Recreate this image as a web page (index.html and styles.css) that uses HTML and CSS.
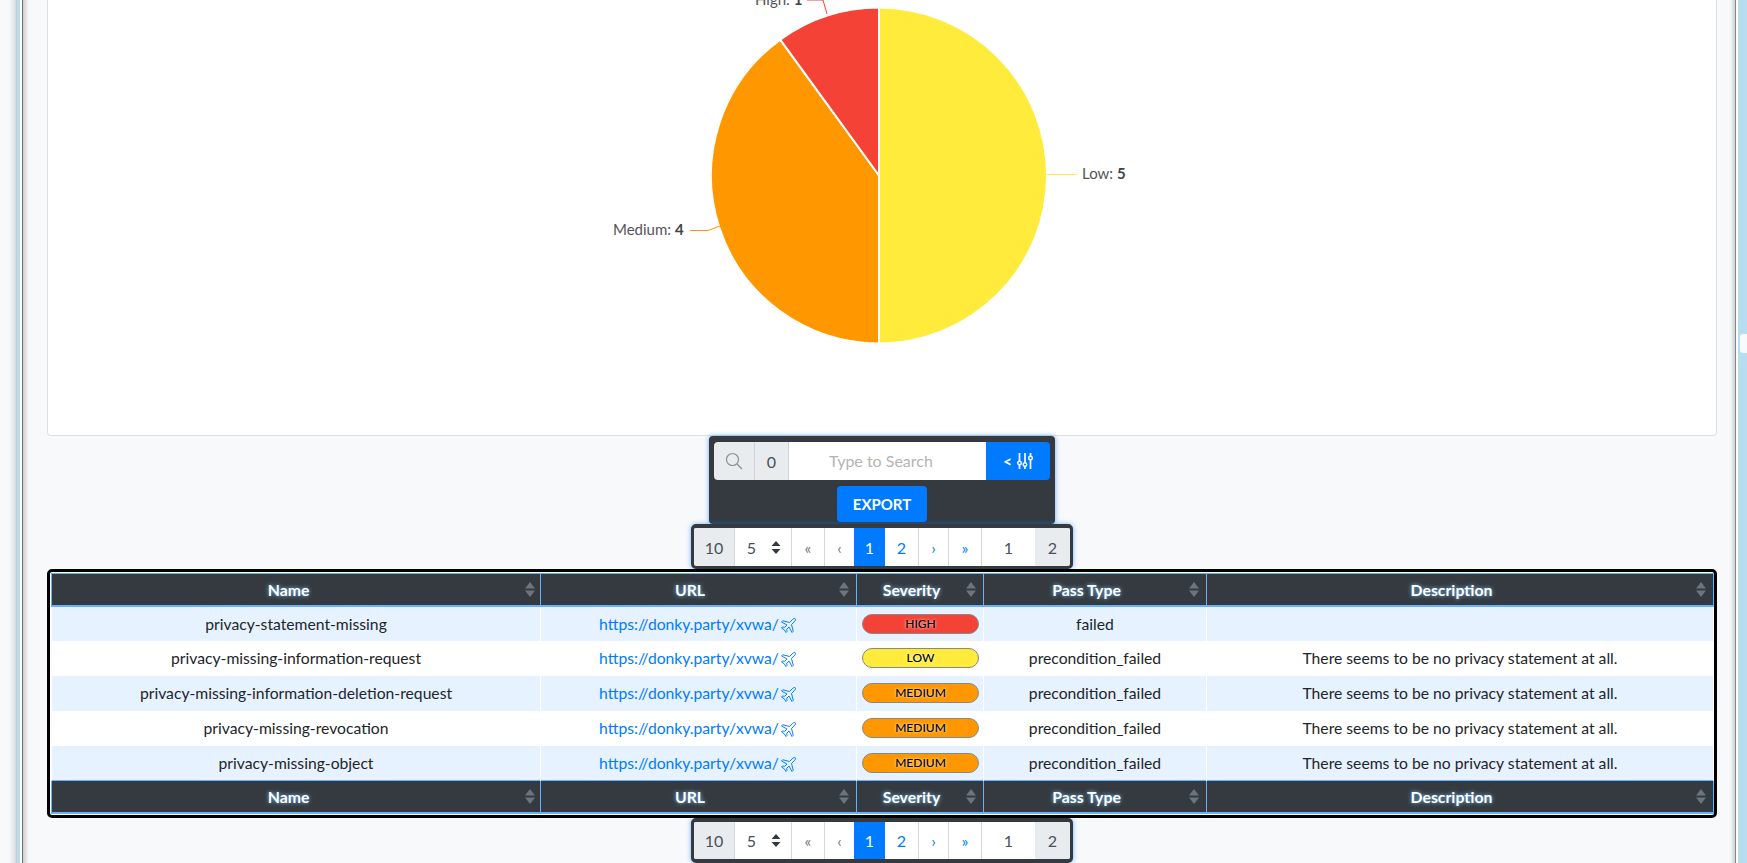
FILE: index.html
```html
<!DOCTYPE html>
<html lang="en">
<head>
<meta charset="utf-8">
<title>Privacy scan report</title>
<link rel="stylesheet" href="styles.css">
</head>
<body>
<svg class="defs" width="0" height="0" aria-hidden="true">
  <symbol id="plane" viewBox="0 0 24 24"><path transform="rotate(45 12 12)" fill="none" stroke="currentColor" stroke-width="1.300" stroke-linejoin="round" d="M12 0.500c1.100 0 2 1.500 2 4v5.500l8.500 5v2.500l-8.500-2.500v4.500l2.500 2v2l-4.500-1-4.500 1v-2l2.500-2v-4.500l-8.500 2.500v-2.500l8.500-5v-5.500c0-2.500 0.900-4 2-4z"/></symbol>
  <symbol id="sort" viewBox="0 0 10 15"><path fill="currentColor" d="M5 0l5 6.500H0zM5 15L0 8.500h10z"/></symbol>
</svg>
<div class="shell">
  <div class="edge-left"><div class="edge-glow"></div><div class="edge-blue"></div><div class="edge-white"></div></div>
  <main class="main">
    <section class="card">
      <svg class="chart" width="1668" height="435" viewBox="48 0 1668 435">
        <path class="slice-low" d="M879 175.500V7.500A168 168 0 0 1 879 343.500Z"/>
        <path class="slice-medium" d="M879 175.500V343.500A168 168 0 0 1 780.250 39.600Z"/>
        <path class="slice-high" d="M879 175.500L780.250 39.600A168 168 0 0 1 879 7.500Z"/>
        <path class="line-low" d="M1047 174.500H1077"/>
        <path class="line-medium" d="M690 230.500H708L720 226"/>
        <path class="line-high" d="M807 0H823L827 14"/>
        <text class="label" x="1082" y="179">Low: <tspan class="label-num">5</tspan></text>
        <text class="label" x="613" y="235">Medium: <tspan class="label-num">4</tspan></text>
        <text class="label" x="755" y="5">High: <tspan class="label-num">1</tspan></text>
      </svg>
    </section>

    <div class="search-widget">
      <div class="search-group">
        <span class="addon addon-icon">
          <svg width="18" height="18" viewBox="0 0 18 18"><circle cx="7.500" cy="7.500" r="6" fill="none" stroke="#8a8f94" stroke-width="1.200"/><path d="M12 12l5 5" stroke="#8a8f94" stroke-width="1.200"/></svg>
        </span>
        <span class="addon addon-count">0</span>
        <span class="search-input">Type to Search</span>
        <button class="search-toggle" type="button">
          <span class="toggle-caret">&lt;</span>
          <svg width="16" height="16" viewBox="0 0 16 16"><g stroke="#fff" stroke-width="1.700" fill="none"><path d="M2.500 0v16M8 0v16M13.500 0v16"/></g><g fill="#007bff" stroke="#fff" stroke-width="1.400"><circle cx="2.500" cy="10" r="1.800"/><circle cx="8" cy="11.500" r="1.800"/><circle cx="13.500" cy="5" r="1.800"/></g></svg>
        </button>
      </div>
      <button class="export" type="button">EXPORT</button>
    </div>

    <nav class="pager pager-top">
      <span class="pg pg-total">10</span>
      <span class="pg pg-size">5<svg width="10" height="13" viewBox="0 0 10 13"><path fill="#343a40" d="M5 0l4.500 5h-9zM5 13L.5 8h9z"/></svg></span>
      <span class="pg pg-first pg-muted">«</span>
      <span class="pg pg-prev pg-muted">‹</span>
      <span class="pg pg-one pg-active">1</span>
      <span class="pg pg-two pg-link">2</span>
      <span class="pg pg-next pg-link">›</span>
      <span class="pg pg-last pg-link">»</span>
      <span class="pg pg-input">1</span>
      <span class="pg pg-pages">2</span>
    </nav>

    <div class="table-wrap">
      <table class="results">
        <thead>
          <tr>
            <th class="col-name"><div class="th-in th-first"><span class="th-text">Name</span><svg class="sort"><use href="#sort"/></svg></div></th>
            <th class="col-url"><div class="th-in"><span class="th-text">URL</span><svg class="sort"><use href="#sort"/></svg></div></th>
            <th class="col-sev"><div class="th-in"><span class="th-text">Severity</span><svg class="sort"><use href="#sort"/></svg></div></th>
            <th class="col-pass"><div class="th-in"><span class="th-text">Pass Type</span><svg class="sort"><use href="#sort"/></svg></div></th>
            <th class="col-desc"><div class="th-in"><span class="th-text">Description</span><svg class="sort"><use href="#sort"/></svg></div></th>
          </tr>
        </thead>
        <tbody>
          <tr>
            <td>privacy-statement-missing</td>
            <td><a class="url" href="#">https://donky.party/xvwa/<svg class="plane"><use href="#plane"/></svg></a></td>
            <td><span class="badge badge-high">HIGH</span></td>
            <td>failed</td>
            <td></td>
          </tr>
          <tr>
            <td>privacy-missing-information-request</td>
            <td><a class="url" href="#">https://donky.party/xvwa/<svg class="plane"><use href="#plane"/></svg></a></td>
            <td><span class="badge badge-low">LOW</span></td>
            <td>precondition_failed</td>
            <td>There seems to be no privacy statement at all.</td>
          </tr>
          <tr>
            <td>privacy-missing-information-deletion-request</td>
            <td><a class="url" href="#">https://donky.party/xvwa/<svg class="plane"><use href="#plane"/></svg></a></td>
            <td><span class="badge badge-medium">MEDIUM</span></td>
            <td>precondition_failed</td>
            <td>There seems to be no privacy statement at all.</td>
          </tr>
          <tr>
            <td>privacy-missing-revocation</td>
            <td><a class="url" href="#">https://donky.party/xvwa/<svg class="plane"><use href="#plane"/></svg></a></td>
            <td><span class="badge badge-medium">MEDIUM</span></td>
            <td>precondition_failed</td>
            <td>There seems to be no privacy statement at all.</td>
          </tr>
          <tr>
            <td>privacy-missing-object</td>
            <td><a class="url" href="#">https://donky.party/xvwa/<svg class="plane"><use href="#plane"/></svg></a></td>
            <td><span class="badge badge-medium">MEDIUM</span></td>
            <td>precondition_failed</td>
            <td>There seems to be no privacy statement at all.</td>
          </tr>
        </tbody>
        <tfoot>
          <tr>
            <th><div class="th-in th-first"><span class="th-text">Name</span><svg class="sort"><use href="#sort"/></svg></div></th>
            <th><div class="th-in"><span class="th-text">URL</span><svg class="sort"><use href="#sort"/></svg></div></th>
            <th><div class="th-in"><span class="th-text">Severity</span><svg class="sort"><use href="#sort"/></svg></div></th>
            <th><div class="th-in"><span class="th-text">Pass Type</span><svg class="sort"><use href="#sort"/></svg></div></th>
            <th><div class="th-in"><span class="th-text">Description</span><svg class="sort"><use href="#sort"/></svg></div></th>
          </tr>
        </tfoot>
      </table>
    </div>

    <nav class="pager pager-bottom">
      <span class="pg pg-total">10</span>
      <span class="pg pg-size">5<svg width="10" height="13" viewBox="0 0 10 13"><path fill="#343a40" d="M5 0l4.500 5h-9zM5 13L.5 8h9z"/></svg></span>
      <span class="pg pg-first pg-muted">«</span>
      <span class="pg pg-prev pg-muted">‹</span>
      <span class="pg pg-one pg-active">1</span>
      <span class="pg pg-two pg-link">2</span>
      <span class="pg pg-next pg-link">›</span>
      <span class="pg pg-last pg-link">»</span>
      <span class="pg pg-input">1</span>
      <span class="pg pg-pages">2</span>
    </nav>
  </main>
  <div class="edge-right"><div class="edge-thumb"></div></div>
</div>
</body>
</html>
```

FILE: styles.css
```css
* { box-sizing: border-box; }

html, body {
  margin: 0;
  height: 863px;
  overflow: hidden;
}

body {
  background: #f8f9fa;
  color: #212529;
  font-family: Lato, "Open Sans", "Liberation Sans", sans-serif;
  font-size: 15.7px;
}

.defs { position: absolute; }

.shell {
  display: flex;
  height: 863px;
  width: 1747px;
}

/* window edges */
.edge-left {
  display: flex;
  flex: 0 0 23px;
  border-right: 1px solid #6c6f72;
}
.edge-glow {
  flex: 0 0 17px;
  background: linear-gradient(90deg, #f8f9fa 0, #f8f9fa 9px, #dfe1e3 15px, #c4c7ca 17px);
}
.edge-blue { flex: 0 0 3px; background: #b8dcf0; }
.edge-white { flex: 1; background: #fff; }

.edge-right {
  flex: 0 0 12px;
  background: linear-gradient(90deg, #fff 0, #fff 2px, #b8dcf0 2px);
  padding-top: 334px;
  padding-left: 4px;
}
.edge-thumb {
  height: 19px;
  background: #f8f9fa;
  border-radius: 3px 0 0 3px;
}

.main {
  flex: 0 0 1712px;
  padding: 0 18px 0 24px;
  border-right: 1px solid #85888b;
  background:
    linear-gradient(90deg, #cdd0d3 0, #f8f9fa 6px) left / 8px 100% no-repeat,
    linear-gradient(270deg, #cdd0d3 0, #f8f9fa 5px) right / 8px 100% no-repeat,
    #f8f9fa;
  display: flex;
  flex-direction: column;
  align-items: center;
}

/* chart card */
.card {
  flex: 0 0 436px;
  width: 1670px;
  background: #fff;
  border: 1px solid #dfdfdf;
  border-top: 0;
  border-radius: 0 0 4px 4px;
}
.chart { display: block; overflow: hidden; }
.slice-low, .slice-medium, .slice-high { stroke: #fff; stroke-width: 2; }
.slice-low { fill: #ffeb3b; }
.slice-medium { fill: #ff9800; }
.slice-high { fill: #f44336; }
.line-low, .line-medium, .line-high { fill: none; stroke-width: 1; }
.line-low { stroke: #ffeb3b; }
.line-medium { stroke: #ff9800; }
.line-high { stroke: #f44336; }
.label { font-size: 15px; fill: #555; }
.label-num { font-weight: 700; fill: #444; }

/* search */
.search-widget {
  flex: 0 0 88px;
  width: 346px;
  background: #343a40;
  border-radius: 4px;
  box-shadow: 0 0 5px rgba(0, 123, 255, .6);
  padding: 6px 5px 0;
  display: flex;
  flex-direction: column;
  align-items: center;
}
.search-group {
  display: flex;
  width: 336px;
  height: 38px;
  flex: none;
  border-radius: 4px;
  overflow: hidden;
}
.addon {
  display: flex;
  align-items: center;
  justify-content: center;
  background: #e9ecef;
  color: #495057;
  border-right: 1px solid #ced4da;
}
.addon-icon { width: 41px; }
.addon-count { width: 34px; font-size: 16px; }
.search-input {
  flex: 1;
  background: #fff;
  color: #b4b4b4;
  text-align: center;
  line-height: 38px;
  font-size: 16px;
  padding-right: 13px;
}
.search-toggle {
  width: 64px;
  border: 0;
  padding: 0;
  background: #007bff;
  color: #fff;
  font: inherit;
  font-weight: 700;
  display: flex;
  align-items: center;
  justify-content: center;
  gap: 5px;
}
.export {
  margin-top: 6px;
  width: 90px;
  height: 36px;
  flex: none;
  border: 0;
  border-radius: 4px;
  background: #007bff;
  color: #fff;
  font: inherit;
  font-size: 15px;
  font-weight: 700;
}

/* pagination */
.pager {
  display: flex;
  justify-content: flex-start;
  width: 382px;
  background: #343a40;
  border: solid #343a40;
  border-width: 4px 3px;
  border-radius: 5px;
  box-shadow: 0 0 5px rgba(0, 123, 255, .55);
  overflow: hidden;
  font-size: 16px;
}
.pager-top { flex: 0 0 45px; margin-top: 0; border-bottom-width: 3px; }
.pager-bottom { flex: 0 0 45px; }
.pg {
  display: flex;
  align-items: center;
  justify-content: center;
  height: 38px;
  background: #fff;
  border-right: 1px solid #d5d9dd;
  color: #495057;
}
.pg-total { width: 41px; background: #e9ecef; }
.pg-size { width: 57px; gap: 15px; padding-left: 2px; }
.pg-first { width: 33px; }
.pg-prev { width: 29px; border-right: 0; }
.pg-one { width: 31px; }
.pg-two { width: 34px; }
.pg-next { width: 30px; }
.pg-last { width: 33px; }
.pg-input { width: 53px; border-right: 0; }
.pg-pages { width: 35px; background: #e9ecef; border-right: 0; }
.pg-muted { color: #6c757d; }
.pg-link { color: #007bff; }
.pg-active { background: #007bff; color: #fff; border-right: 0; }

/* table */
.table-wrap {
  flex: 0 0 248px;
  width: 1670px;
  margin-top: 0;
  border: 3px solid #000;
  border-radius: 5px;
  padding: 1px;
  background: #fff;
  position: relative;
}
.results {
  width: 1662px;
  table-layout: fixed;
  border-collapse: collapse;
}
.col-name { width: 489px; }
.col-url { width: 316px; }
.col-sev { width: 127px; }
.col-pass { width: 223px; }
.col-desc { width: 507px; }

.results th {
  height: 32px;
  padding: 0;
  background: #343a40;
  color: #fff;
  border: 1px solid #66b2ff;
  border-width: 1px 1px 2px;
  font-weight: 700;
  font-size: 15.8px;
  text-shadow: 0 0 4px #7cc0ff;
}
.th-in {
  display: flex;
  align-items: center;
  padding-right: 7px;
}
.th-first { padding-right: 5px; }
.th-text { flex: 1; text-align: center; }
.sort { width: 10px; height: 15px; color: #6c757d; flex: none; }

.results td {
  height: 35px;
  padding: 0;
  text-align: center;
  border-left: 1px solid #fff;
  border-right: 1px solid #fff;
}
.results tbody tr:nth-child(odd) td { background: #e6f2ff; }

.url { color: #007bff; text-decoration: none; }
.plane {
  width: 17px;
  height: 17px;
  margin-left: 2px;
  vertical-align: -3px;
  color: #007bff;
}

.badge {
  display: block;
  width: 117px;
  height: 20px;
  margin: 0 0 0 5px;
  border: 1px solid #888;
  border-radius: 10px;
  font-size: 12px;
  line-height: 17px;
  font-weight: 500;
  color: #000;
}
.badge-high { background: #f44336; text-shadow: 0 0 3px #fff; }
.badge-low { background: #ffeb3b; text-shadow: 0 0 3px #fff; }
.badge-medium { background: #ff9800; text-shadow: 0 0 3px #fff; }
```
